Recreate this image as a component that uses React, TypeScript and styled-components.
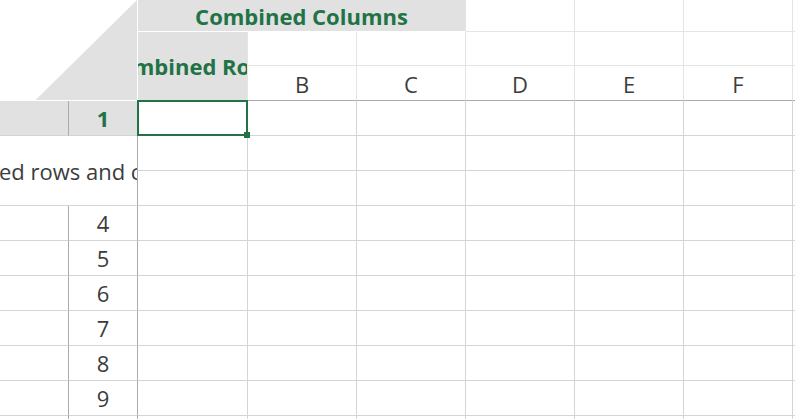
import { createGlobalStyle, css, styled } from "styled-components"

const green = "#217346"
const headGray = "#e1e1e1"
const gridLine = "#d4d4d4"
const darkLine = "#ababab"
const headLine = "#e4e4e4"
const ink = "#3c3c3c"

const GlobalStyle = createGlobalStyle`
  html, body {
    margin: 0;
    padding: 0;
    background: #ffffff;
    overflow: hidden;
  }
  body {
    font-family: "Open Sans", "Noto Sans", "Liberation Sans", sans-serif;
  }
`

type Place = { $col: number; $row: number; $cspan?: number; $rspan?: number }

// grid placement shared by every cell kind
const place = ({ $col, $row, $cspan = 1, $rspan = 1 }: Place) => css`
  grid-column: ${$col} / span ${$cspan};
  grid-row: ${$row} / span ${$rspan};
`

const Sheet = styled.div`
  display: grid;
  grid-template-columns: 69px 69px 110px repeat(6, 109px);
  grid-template-rows: 32px 34px 35px repeat(10, 35px);
  width: 795px;
  height: 419px;
  overflow: hidden;
`

const Corner = styled.div`
  grid-column: 1 / span 2;
  grid-row: 1 / span 3;
  box-sizing: border-box;
  border-right: 1px solid #ffffff;
  border-bottom: 1px solid #ffffff;
  background: #ffffff;
`

const Triangle = styled.div`
  width: 100%;
  height: 100%;
  background: ${headGray};
  clip-path: polygon(100% 0, 100% 100%, 26% 100%);
`

const BandHeader = styled.div<Place & { $below: string }>`
  ${place};
  box-sizing: border-box;
  display: flex;
  align-items: center;
  justify-content: center;
  overflow: hidden;
  white-space: nowrap;
  background: ${headGray};
  border-right: 1px solid ${headLine};
  border-bottom: 1px solid ${(p) => p.$below};
  color: ${green};
  font-weight: 700;
  font-size: 22px;

  span {
    flex: none;
  }
`

const ColHeader = styled.div<Place & { $last?: boolean }>`
  ${place};
  box-sizing: border-box;
  display: flex;
  align-items: center;
  justify-content: center;
  padding-top: 2px;
  border-right: 1px solid ${headLine};
  border-bottom: 1px solid ${(p) => (p.$last ? darkLine : headLine)};
  color: ${ink};
  font-size: 22px;
`

const RowHeader = styled.div<Place & { $active?: boolean }>`
  ${place};
  box-sizing: border-box;
  display: flex;
  align-items: center;
  justify-content: center;
  border-right: 1px solid ${darkLine};
  border-bottom: 1px solid ${gridLine};
  background: ${(p) => (p.$active ? headGray : "#ffffff")};
  color: ${(p) => (p.$active ? green : ink)};
  font-weight: ${(p) => (p.$active ? 700 : 400)};
  font-size: 22px;
`

const RowLabel = styled(RowHeader)`
  overflow: hidden;
  white-space: nowrap;

  span {
    flex: none;
  }
`

const Cell = styled.div<Place & { $selected?: boolean }>`
  ${place};
  box-sizing: border-box;
  border-right: 1px solid ${gridLine};
  border-bottom: 1px solid ${gridLine};
  background: #ffffff;

  ${(p) =>
    p.$selected &&
    css`
      position: relative;
      z-index: 2;

      &::before {
        content: "";
        position: absolute;
        inset: -1px;
        border: 2px solid ${green};
      }

      &::after {
        content: "";
        position: absolute;
        right: -3px;
        bottom: -3px;
        width: 6px;
        height: 6px;
        background: ${green};
      }
    `}
`

const letters = ["B", "C", "D", "E", "F", ""]
const bodyRows = [1, 2, 3, 4, 5, 6, 7, 8, 9, 10]
const bodyCols = [3, 4, 5, 6, 7, 8, 9]
const numberedRows = [4, 5, 6, 7, 8, 9, 10]

export default function App() {
  return (
    <>
      <GlobalStyle />
      <Sheet>
        <Corner>
          <Triangle />
        </Corner>

        <BandHeader $col={3} $row={1} $cspan={3} $below="#ffffff">
          <span>Combined Columns</span>
        </BandHeader>
        {[6, 7, 8, 9].map((c) => (
          <ColHeader key={`h1-${c}`} $col={c} $row={1} />
        ))}

        <BandHeader $col={3} $row={2} $rspan={2} $below={darkLine}>
          <span>Combined Rows</span>
        </BandHeader>
        {letters.map((l, i) => (
          <ColHeader key={`h2-${i}`} $col={4 + i} $row={2} />
        ))}
        {letters.map((l, i) => (
          <ColHeader key={`h3-${i}`} $col={4 + i} $row={3} $last>
            {l}
          </ColHeader>
        ))}

        <RowHeader $col={1} $row={4} $active />
        <RowHeader $col={2} $row={4} $active>
          1
        </RowHeader>
        <RowLabel $col={1} $row={5} $cspan={2} $rspan={2}>
          <span>Combined rows and columns</span>
        </RowLabel>
        {numberedRows.map((n) => (
          <RowHeader key={`rh-a-${n}`} $col={1} $row={n + 3} />
        ))}
        {numberedRows.map((n) => (
          // the last row sits below the window edge, so it keeps no number
          <RowHeader key={`rh-b-${n}`} $col={2} $row={n + 3}>
            {n < 10 ? n : ""}
          </RowHeader>
        ))}

        {bodyRows.map((r) =>
          bodyCols.map((c) => (
            <Cell
              key={`${r}-${c}`}
              $col={c}
              $row={r + 3}
              $selected={r === 1 && c === 3}
            />
          ))
        )}
      </Sheet>
    </>
  )
}
